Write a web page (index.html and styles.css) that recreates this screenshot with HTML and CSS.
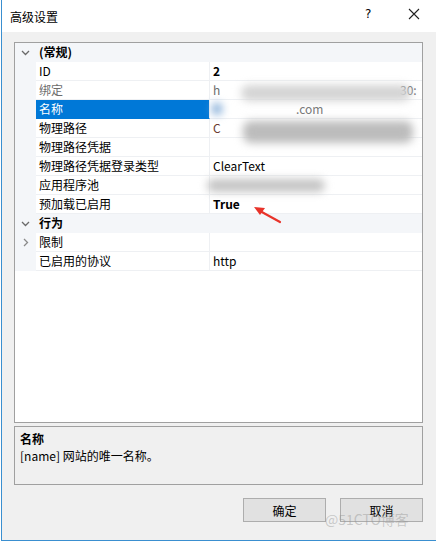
FILE: index.html
```html
<!DOCTYPE html>
<html>
<head>
<meta charset="utf-8">
<link rel="stylesheet" href="styles.css">
</head>
<body>
<div class="window">
  <div class="titlebar">
    <span class="title">高级设置</span>
    <span class="help">?</span>
    <svg class="close" width="12" height="12" viewBox="0 0 12 12"><path d="M1 1L11 11M11 1L1 11" stroke="#222" stroke-width="1.1"/></svg>
  </div>
  <div class="body">
    <div class="grid">
      <div class="row cat"><span class="gut"><svg width="9" height="6" viewBox="0 0 9 6"><path d="M1 1L4.5 4.5L8 1" fill="none" stroke="#6a6a6a" stroke-width="1.3"/></svg></span><span class="name b">(常规)</span></div>
      <div class="row"><span class="gut"></span><span class="name">ID</span><span class="val b">2</span></div>
      <div class="row"><span class="gut"></span><span class="name dim">绑定</span><span class="val dim">h<span class="tail">30:</span></span></div>
      <div class="row"><span class="gut"></span><span class="name sel">名称</span><span class="val"><span class="dom">.com</span></span></div>
      <div class="row"><span class="gut"></span><span class="name">物理路径</span><span class="val red">C</span></div>
      <div class="row"><span class="gut"></span><span class="name">物理路径凭据</span><span class="val"></span></div>
      <div class="row"><span class="gut"></span><span class="name">物理路径凭据登录类型</span><span class="val">ClearText</span></div>
      <div class="row"><span class="gut"></span><span class="name">应用程序池</span><span class="val"></span></div>
      <div class="row"><span class="gut"></span><span class="name">预加载已启用</span><span class="val b">True</span></div>
      <div class="row cat"><span class="gut"><svg width="9" height="6" viewBox="0 0 9 6"><path d="M1 1L4.5 4.5L8 1" fill="none" stroke="#6a6a6a" stroke-width="1.3"/></svg></span><span class="name b">行为</span></div>
      <div class="row"><span class="gut"><svg width="6" height="9" viewBox="0 0 6 9"><path d="M1 1L4.5 4.5L1 8" fill="none" stroke="#8a8a8a" stroke-width="1.3"/></svg></span><span class="name">限制</span><span class="val"></span></div>
      <div class="row"><span class="gut"></span><span class="name">已启用的协议</span><span class="val">http</span></div>
      <div class="blur b1"></div>
      <div class="blur b2"></div>
      <div class="blur b3"></div>
      <div class="blur b4"></div>
      <svg class="arrow" width="40" height="24" viewBox="0 0 40 24"><path d="M29 19L9 8" stroke="#e8332a" stroke-width="2.2" stroke-linecap="round"/><path d="M3 4L14 5L9 12Z" fill="#e8332a"/></svg>
    </div>
    <div class="desc">
      <div class="dtitle">名称</div>
      <div class="dtext">[name] 网站的唯一名称。</div>
    </div>
    <div class="buttons">
      <button class="btn">确定</button>
      <button class="btn">取消</button>
    </div>
    <div class="wm">@51CTO博客</div>
  </div>
</div>
</body>
</html>
```
FILE: styles.css
```css
html, body {
  margin: 0;
  padding: 0;
  width: 436px;
  height: 542px;
  overflow: hidden;
  background: #ffffff;
  font-family: "Noto Sans CJK SC", "Noto Sans", sans-serif;
  font-size: 12px;
  color: #000;
}
.window {
  margin-left: 1px;
  width: 440px;
  height: 540px;
  border-left: 1px solid #3a8fd0;
  border-bottom: 1px solid #3a8fd0;
  background: #f0f0f0;
  display: flex;
  flex-direction: column;
}
.titlebar {
  height: 32px;
  background: #fff;
  display: flex;
  align-items: center;
  position: relative;
}
.title {
  margin-left: 8px;
  font-size: 12px;
}
.help {
  position: absolute;
  left: 363px;
  top: 7px;
  font-family: "DejaVu Sans", sans-serif;
  font-size: 12px;
}
.close {
  position: absolute;
  left: 406px;
  top: 8px;
}
.body {
  flex: 1;
  position: relative;
  padding: 10px 0 0 12px;
}
.grid {
  position: relative;
  width: 407px;
  height: 379px;
  border: 1px solid #a0a0a0;
  background: #fff;
  overflow: hidden;
}
.row {
  height: 19px;
  display: flex;
  align-items: stretch;
  line-height: 18px;
}
.gut {
  width: 21px;
  background: #f4f6f9;
  display: flex;
  align-items: center;
  justify-content: center;
  flex: none;
}
.name {
  width: 174px;
  padding-left: 3px;
  box-sizing: border-box;
  border-bottom: 1px solid #eef0f3;
  border-right: 1px solid #eef0f3;
  flex: none;
  white-space: nowrap;
}
.val {
  flex: 1;
  padding-left: 3px;
  border-bottom: 1px solid #eef0f3;
  position: relative;
  white-space: nowrap;
}
.cat {
  background: #f4f6f9;
}
.cat .name {
  border: none;
}
.b { font-weight: bold; }
.dim { color: #6d6d6d; }
.sel {
  background: #0078d7;
  color: #fff;
  border-bottom-color: #0078d7;
}
.red { color: #6a3a30; }
.tail {
  position: absolute;
  left: 190px;
  top: 0;
}
.dom {
  position: absolute;
  left: 86px;
  top: 0;
  color: #777;
}
.blur {
  position: absolute;
  background: #c8c8c8;
  filter: blur(4px);
  border-radius: 8px;
}
.b1 { left: 226px; top: 42px; width: 170px; height: 16px; background: #d4d4d4; }
.b2 { left: 228px; top: 78px; width: 170px; height: 22px; background: #bcbcbc; }
.b3 { left: 192px; top: 136px; width: 118px; height: 13px; background: #c4c4c4; }
.b4 { left: 197px; top: 60px; width: 10px; height: 12px; background: #7ea9d6; }
.arrow {
  position: absolute;
  left: 236px;
  top: 160px;
}
.desc {
  margin-top: 3px;
  width: 407px;
  height: 57px;
  border: 1px solid #a0a0a0;
  padding: 3px 5px;
  box-sizing: border-box;
  width: 409px;
  height: 59px;
  line-height: 17px;
}
.dtitle { font-weight: bold; }
.buttons {
  display: flex;
  gap: 14px;
  margin: 13px 0 0 229px;
}
.btn {
  width: 83px;
  height: 24px;
  background: #e1e1e1;
  border: 1px solid #adadad;
  font-family: "Noto Sans CJK SC", sans-serif;
  font-size: 12px;
  padding: 0;
  color: #000;
}
.wm {
  position: absolute;
  left: 323px;
  top: 477px;
  font-family: "Noto Sans CJK SC", sans-serif;
  font-size: 14px;
  color: rgba(150,150,150,0.45);
}
```
